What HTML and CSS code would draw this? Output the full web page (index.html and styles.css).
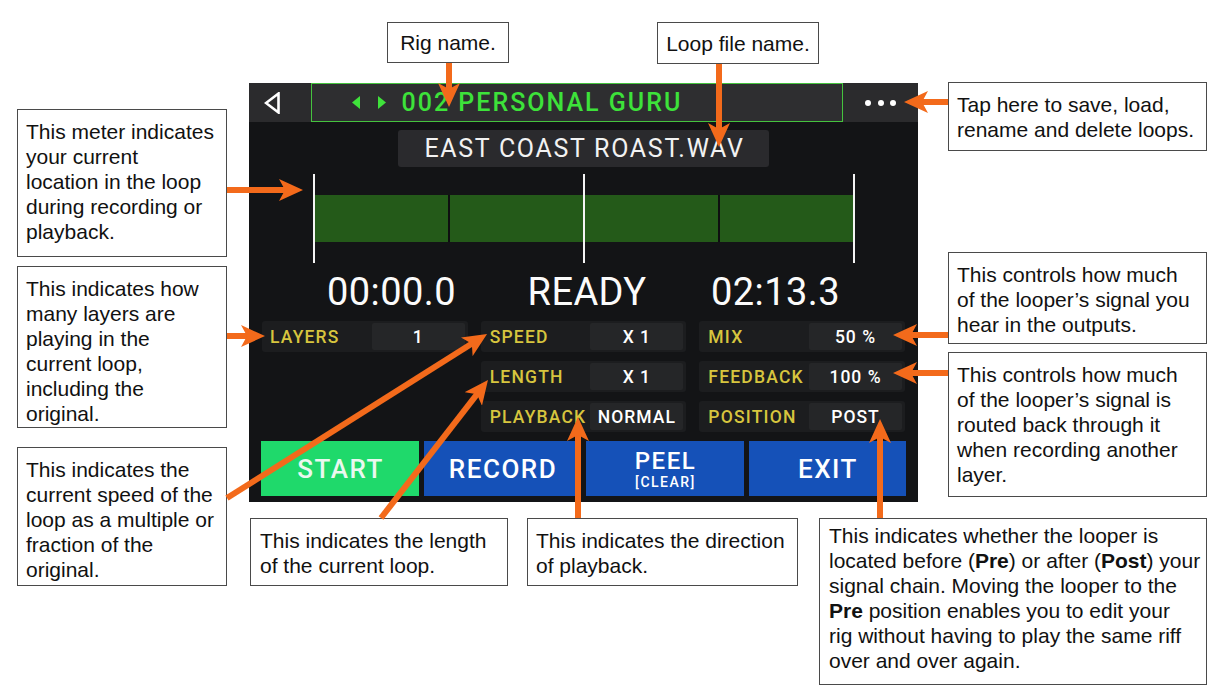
FILE: index.html
```html
<!DOCTYPE html>
<html>
<head>
<meta charset="utf-8">
<link rel="stylesheet" href="styles.css">
</head>
<body>
<div class="tag tag-rig">Rig name.</div>
<div class="tag tag-file">Loop file name.</div>

<div class="note n-meter">This meter indicates<br>your current<br>location in the loop<br>during recording or<br>playback.</div>
<div class="note n-layers">This indicates how<br>many layers are<br>playing in the<br>current loop,<br>including the<br>original.</div>
<div class="note n-speed">This indicates the<br>current speed of the<br>loop as a multiple or<br>fraction of the<br>original.</div>
<div class="note n-length">This indicates the length<br>of the current loop.</div>
<div class="note n-playback">This indicates the direction<br>of playback.</div>
<div class="note n-position">This indicates whether the looper is<br>located before (<b>Pre</b>) or after (<b>Post</b>) your<br>signal chain. Moving the looper to the<br><b>Pre</b> position enables you to edit your<br>rig without having to play the same riff<br>over and over again.</div>
<div class="note n-tap">Tap here to save, load,<br>rename and delete loops.</div>
<div class="note n-mix">This controls how much<br>of the looper’s signal you<br>hear in the outputs.</div>
<div class="note n-feedback">This controls how much<br>of the looper’s signal is<br>routed back through it<br>when recording another<br>layer.</div>

<div class="screen">
  <div class="topbar">
    <div class="back">
      <svg width="16" height="22" viewBox="0 0 16 22"><polygon points="14.5,1.5 2,11 14.5,20.5" fill="none" stroke="#fff" stroke-width="2.6" stroke-linejoin="miter"/></svg>
    </div>
    <div class="rig">
      <svg class="tri" width="8" height="13" viewBox="0 0 8 13"><polygon points="8,0 0,6.5 8,13" fill="#3fe23b"/></svg>
      <svg class="tri tri-r" width="8" height="13" viewBox="0 0 8 13"><polygon points="0,0 8,6.5 0,13" fill="#3fe23b"/></svg>
      <span class="rig-name">002 PERSONAL GURU</span>
    </div>
    <div class="more"><i></i><i></i><i></i></div>
  </div>
  <div class="file">EAST COAST ROAST.WAV</div>
  <div class="meter">
    <span class="mark"></span><span class="seg"></span><span class="sep"></span><span class="seg"></span>
    <span class="mark"></span><span class="seg"></span><span class="sep"></span><span class="seg"></span>
    <span class="mark"></span>
  </div>
  <div class="times">
    <span>00:00.0</span><span>READY</span><span>02:13.3</span>
  </div>
  <div class="params">
    <div class="cell c1 r1"><span class="label">LAYERS</span><span class="value">1</span></div>
    <div class="cell c2 r1"><span class="label">SPEED</span><span class="value">X 1</span></div>
    <div class="cell c3 r1"><span class="label">MIX</span><span class="value">50 %</span></div>
    <div class="cell c2 r2"><span class="label">LENGTH</span><span class="value">X 1</span></div>
    <div class="cell c3 r2"><span class="label">FEEDBACK</span><span class="value">100 %</span></div>
    <div class="cell c2 r3"><span class="label">PLAYBACK</span><span class="value">NORMAL</span></div>
    <div class="cell c3 r3"><span class="label">POSITION</span><span class="value">POST</span></div>
  </div>
  <div class="buttons">
    <div class="btn btn-start">START</div>
    <div class="btn">RECORD</div>
    <div class="btn btn-peel"><span class="peel-main">PEEL</span><span class="peel-sub">[CLEAR]</span></div>
    <div class="btn">EXIT</div>
  </div>
</div>

<svg class="arrows" width="1223" height="691" viewBox="0 0 1223 691">
  <defs>
    <marker id="ah" markerUnits="userSpaceOnUse" markerWidth="24" markerHeight="22" refX="10" refY="11" orient="auto">
      <path d="M0,0 L24,11 L0,22 L6,11 Z" fill="#f36a1b" stroke="none"/>
    </marker>
  </defs>
  <g stroke="#f36a1b" stroke-width="6" fill="none">
    <line x1="449" y1="63" x2="449" y2="93" marker-end="url(#ah)"/>
    <line x1="719" y1="64" x2="719" y2="133" marker-end="url(#ah)"/>
    <line x1="948" y1="102" x2="918" y2="102" marker-end="url(#ah)"/>
    <line x1="227" y1="190" x2="289" y2="190" marker-end="url(#ah)"/>
    <line x1="227" y1="336" x2="251" y2="336" marker-end="url(#ah)"/>
    <line x1="227" y1="498" x2="475.2" y2="341.5" marker-end="url(#ah)"/>
    <line x1="381" y1="518" x2="479.4" y2="391.1" marker-end="url(#ah)"/>
    <line x1="578" y1="518" x2="578" y2="431" marker-end="url(#ah)"/>
    <line x1="880" y1="518" x2="880" y2="433" marker-end="url(#ah)"/>
    <line x1="948" y1="335" x2="907" y2="335" marker-end="url(#ah)"/>
    <line x1="948" y1="373" x2="907" y2="373" marker-end="url(#ah)"/>
  </g>
</svg>
</body>
</html>
```
FILE: styles.css
```css
* { box-sizing: border-box; }
html, body { margin: 0; padding: 0; }
body {
  width: 1223px;
  height: 691px;
  position: relative;
  overflow: hidden;
  background: #fff;
  font-family: "Liberation Sans", Arial, sans-serif;
  color: #111;
}

/* callouts */
.note, .tag {
  position: absolute;
  background: #fff;
  border: 1px solid #4a4a4a;
  font-size: 21px;
  line-height: 25px;
  white-space: nowrap;
}
.note { padding: 9px 8px 0 8px; }
.tag { display: flex; align-items: center; justify-content: center; }
.tag-rig { left: 387px; top: 22px; width: 122px; height: 41px; }
.tag-file { left: 657px; top: 22px; width: 162px; height: 42px; }

.n-meter { left: 17px; top: 109px; width: 210px; height: 148px; }
.n-layers { left: 17px; top: 266px; width: 210px; height: 162px; }
.n-speed { left: 17px; top: 447px; width: 210px; height: 139px; }
.n-length { left: 250px; top: 518px; width: 258px; height: 68px; padding-left: 9px; }
.n-playback { left: 527px; top: 518px; width: 271px; height: 68px; }
.n-position { left: 819px; top: 518px; width: 388px; height: 167px; padding-top: 4px; padding-left: 9px; }
.n-tap { left: 948px; top: 82px; width: 259px; height: 69px; }
.n-mix { left: 948px; top: 252px; width: 259px; height: 92px; }
.n-feedback { left: 948px; top: 352px; width: 259px; height: 145px; }

.arrows { position: absolute; left: 0; top: 0; pointer-events: none; z-index: 5; }

/* device screen */
.screen {
  position: absolute;
  left: 249px;
  top: 83px;
  width: 669px;
  height: 419px;
  background: #131416;
  display: flex;
  flex-direction: column;
  font-family: Roboto, "Liberation Sans", sans-serif;
  color: #fff;
}

.topbar {
  height: 39px;
  background: #2b2b2d;
  display: flex;
  align-items: stretch;
}
.back {
  width: 62px;
  display: flex;
  align-items: center;
  padding-left: 15px;
}
.back svg { display: block; }
.rig {
  width: 532px;
  border: 1.5px solid #45c33e;
  background: #2e2e30;
  display: flex;
  align-items: center;
  padding-left: 39.5px;
}
.tri { display: block; }
.tri-r { margin-left: 18px; }
.rig-name {
  margin-left: 16px;
  color: #3de23a;
  font-size: 25px;
  font-weight: 500;
  letter-spacing: 2px;
  line-height: 30px;
}
.more {
  flex: 1;
  display: flex;
  justify-content: flex-end;
  align-items: center;
  gap: 6.5px;
  padding-right: 22px;
}
.more i {
  width: 6px;
  height: 6px;
  border-radius: 50%;
  background: #fff;
}

.file {
  align-self: center;
  margin-top: 8px;
  width: 371px;
  height: 37px;
  background: #2a2a2d;
  border-radius: 3px;
  display: flex;
  align-items: center;
  justify-content: center;
  font-size: 25px;
  letter-spacing: 1.7px;
  color: #f2f2f2;
  padding-left: 2px;
}

.meter {
  margin: 7px 0 0 64px;
  width: 542px;
  height: 89px;
  display: flex;
  align-items: center;
}
.mark { width: 2px; height: 89px; background: #f4f4f4; }
.seg { flex: 1; height: 47px; background: #245a19; }
.sep { width: 2px; height: 47px; background: #0e0f10; }

.times {
  margin-top: 9px;
  height: 40px;
  display: grid;
  grid-template-columns: 161px 230px 147px;
  padding-left: 62px;
  font-size: 38px;
  line-height: 40px;
  color: #fbfbfb;
  text-align: center;
  letter-spacing: 0.4px;
}

.params {
  margin-top: 9px;
  padding: 0 13px;
  display: grid;
  grid-template-columns: repeat(3, 1fr);
  grid-auto-rows: 31px;
  column-gap: 13px;
  row-gap: 9px;
}
.cell {
  background: #1c1d1f;
  border-radius: 3px;
  display: flex;
  align-items: center;
  justify-content: space-between;
  padding: 2px 3px 2px 8px;
}
.c2, .c3 { padding-left: 9px; }
.c1 { grid-column: 1; }
.c2 { grid-column: 2; }
.c3 { grid-column: 3; }
.r1 { grid-row: 1; }
.r2 { grid-row: 2; }
.r3 { grid-row: 3; }
.label {
  color: #d7c53e;
  font-size: 17.5px;
  font-weight: 500;
  letter-spacing: 1.2px;
  white-space: nowrap;
}
.value {
  width: 93px;
  align-self: stretch;
  background: #252628;
  border-radius: 2px;
  display: flex;
  align-items: center;
  justify-content: center;
  color: #fff;
  font-size: 17.5px;
  font-weight: 500;
  letter-spacing: 1px;
  white-space: nowrap;
}

.buttons {
  margin-top: 9px;
  padding: 0 12px;
  height: 55px;
  display: grid;
  grid-template-columns: repeat(4, 1fr);
  gap: 5px;
}
.btn {
  background: #1551b8;
  color: #fff;
  display: flex;
  align-items: center;
  justify-content: center;
  font-size: 26px;
  font-weight: 500;
  letter-spacing: 1.5px;
  padding-left: 1.5px;
}
.btn-start { background: #1fd96b; color: #eaf8ef; }
.btn-peel { flex-direction: column; }
.peel-main { font-size: 24px; line-height: 26px; }
.peel-sub { font-size: 14px; line-height: 16px; letter-spacing: 1.5px; }
```
